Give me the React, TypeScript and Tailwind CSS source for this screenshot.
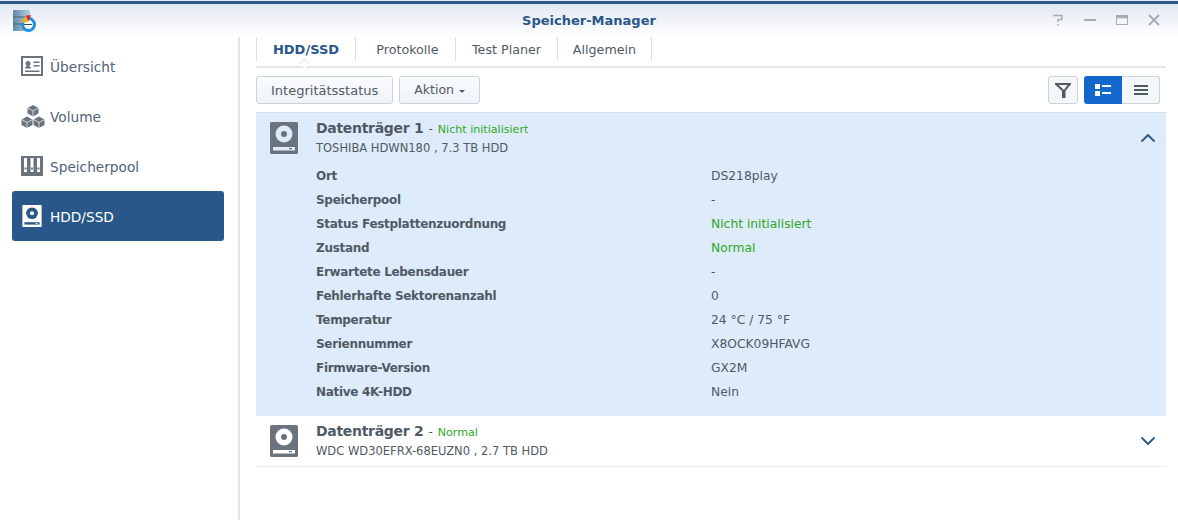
import { ChevronDown, ChevronUp } from "lucide-react";

const font = "font-['DejaVu_Sans',Verdana,sans-serif]";

const details: { label: string; value: string; green?: boolean }[] = [
  { label: "Ort", value: "DS218play" },
  { label: "Speicherpool", value: "-" },
  { label: "Status Festplattenzuordnung", value: "Nicht initialisiert", green: true },
  { label: "Zustand", value: "Normal", green: true },
  { label: "Erwartete Lebensdauer", value: "-" },
  { label: "Fehlerhafte Sektorenanzahl", value: "0" },
  { label: "Temperatur", value: "24 °C / 75 °F" },
  { label: "Seriennummer", value: "X8OCK09HFAVG" },
  { label: "Firmware-Version", value: "GX2M" },
  { label: "Native 4K-HDD", value: "Nein" },
];

function AppIcon() {
  return (
    <svg width="24" height="22" viewBox="0 0 24 22">
      <defs>
        <linearGradient id="db" x1="0" x2="1" y1="0" y2="0">
          <stop offset="0" stopColor="#5f86a8" />
          <stop offset="1" stopColor="#b6cfe2" />
        </linearGradient>
      </defs>
      <rect x="0" y="0" width="17" height="21" rx="1" fill="url(#db)" />
      <path d="M0 7h17M0 14h17" stroke="#4a5f73" strokeWidth="1" />
      <circle cx="15.500" cy="14.500" r="6" fill="#fff" stroke="#1e90e0" strokeWidth="3" />
      <path d="M7.500 13 L13 5.500 L15.500 11.500 Z" fill="#f2b01e" />
      <path d="M13 5.500 L18 5 L15.500 11.500 Z" fill="#d9232e" />
      <path d="M11 14.500h8" stroke="#2a4d6c" strokeWidth="1" />
    </svg>
  );
}

function OverviewIcon() {
  return (
    <svg width="22" height="20" viewBox="0 0 22 20">
      <path fillRule="evenodd" fill="#6b747e" d="M0 0h22v20H0zM2 2v16h18V2z" />
      <circle cx="7" cy="7.500" r="2.500" fill="#6b747e" />
      <path d="M4 12.500c0-2 1.500-2.500 3-2.500s3 .5 3 2.500z" fill="#6b747e" />
      <path d="M12.500 5.500h6v1.500h-6zM12.500 9h6v1.500h-6zM4 14.500h14.500V16H4z" fill="#6b747e" />
    </svg>
  );
}

function VolumeIcon() {
  return (
    <svg width="24" height="23" viewBox="0 0 24 23">
      <path d="M12 0l5.500 3v5.500L12 11.500 6.500 8.500V3z" fill="#6b747e" />
      <path d="M6 11.500l5.500 3V20L6 23l-5.500-3v-5.500z" fill="#6b747e" />
      <path d="M18 11.500l5.500 3V20L18 23l-5.500-3v-5.500z" fill="#6b747e" />
      <path d="M6.500 3L12 6l5.500-3M12 6v5.500M.5 14.500l5.500 3 5.500-3M6 17.500V23M12.500 14.500l5.500 3 5.500-3M18 17.500V23" stroke="#fff" strokeWidth="0.7" fill="none" />
    </svg>
  );
}

function PoolIcon() {
  return (
    <svg width="22" height="20" viewBox="0 0 22 20">
      <path fillRule="evenodd" fill="#6b747e" d="M0 0h22v20H0zM3 2v14h3V2zM9.500 2v14h3V2zM16 2v14h3V2z" />
      <path d="M3.500 11.500h2v2h-2zM10 11.500h2v2h-2zM16.500 11.500h2v2h-2z" fill="#6b747e" />
    </svg>
  );
}

function DiskIcon({ fill, hole, size }: { fill: string; hole: string; size: "sm" | "lg" }) {
  const w = size === "lg" ? 28 : 20;
  const h = size === "lg" ? 32 : 22;
  return (
    <svg width={w} height={h} viewBox="0 0 28 32">
      <rect width="28" height="32" rx="1.500" fill={fill} />
      <circle cx="14" cy="12" r="8.500" fill={hole} />
      <circle cx="14" cy="12" r="3" fill={fill} />
      <rect x="3" y="25" width="22" height="3.500" fill={hole} />
      <rect x="19" y="26" width="3" height="1.300" fill={fill} />
    </svg>
  );
}

function NavItem({ icon, label, active }: { icon: React.ReactNode; label: string; active?: boolean }) {
  return (
    <div className={`flex h-[50px] items-center rounded-[3px] pl-[9px] text-[13.700px] ${active ? "bg-[#2a5789] text-white" : "text-[#52637a]"}`}>
      <span className="flex w-[29px] items-center">{icon}</span>
      <span className="pt-[2px]">{label}</span>
    </div>
  );
}

function Tab({ label, width, active }: { label: string; width: string; active?: boolean }) {
  return (
    <div className={`flex h-6 items-center justify-center border-r border-[#d7dfe6] pt-[2px] ${width} ${active ? "text-[13px] font-bold text-[#2a5789]" : "text-[12.700px] text-[#505a64]"}`}>
      {label}
    </div>
  );
}

function ToolButton({ children }: { children: React.ReactNode }) {
  return (
    <div className="flex h-7 items-center rounded-[3px] border border-[#c8d3de] bg-gradient-to-b from-[#f9fbfd] to-[#eef3f8] px-[14px] pt-[1px] text-[#505a64]">
      {children}
    </div>
  );
}

function DiskHeader({ name, status, model, open }: { name: string; status: string; model: string; open?: boolean }) {
  return (
    <div className="flex items-start">
      <div className="ml-[14px] mt-[9px] w-[46px]">
        <DiskIcon size="lg" fill="#6b747e" hole={open ? "#deebfa" : "#ffffff"} />
      </div>
      <div className="flex-1 pt-[5px]">
        <div className="flex h-[20px] items-baseline">
          <span className="text-[14px] font-bold tracking-[-0.3px] text-[#505a64]">{name}</span>
          <span className="ml-[5px] text-[12px] text-[#505a64]">-</span>
          <span className="ml-[5px] text-[11.100px] text-[#2fa81e]">{status}</span>
        </div>
        <div className="mt-[2px] text-[11.500px] text-[#505a64]">{model}</div>
      </div>
      <div className="mr-[6px] mt-[13px] text-[#2a5789]">
        {open ? <ChevronUp size={24} strokeWidth={1.8} /> : <ChevronDown size={24} strokeWidth={1.8} />}
      </div>
    </div>
  );
}

export default function App() {
  return (
    <div className={`flex h-[520px] w-[1178px] flex-col overflow-hidden bg-white text-[13px] ${font}`}>
      <div className="h-[1px] bg-[#e8edf2]" />
      <div className="h-[3px] bg-[#2a5789]" />
      <div className="relative flex h-[33px] items-center justify-center bg-gradient-to-b from-[#e2e8f1] to-white">
        <div className="absolute left-[13px] top-[6px]">
          <AppIcon />
        </div>
        <span className="text-[13px] font-bold text-[#2a5789]">Speicher-Manager</span>
        <div className="absolute right-[18px] top-[10px] flex items-center gap-[20px] text-[#a5adb5]">
          <svg width="12" height="12" viewBox="0 0 12 12" fill="none" stroke="currentColor" strokeWidth="1.500">
            <path d="M1 1.500h9v4H6v2.500M6 10v1.500" />
          </svg>
          <svg width="12" height="12" viewBox="0 0 12 12" fill="currentColor">
            <rect y="5" width="12" height="2" />
          </svg>
          <svg width="12" height="12" viewBox="0 0 12 12" fill="none" stroke="currentColor">
            <rect x="0.500" y="1.500" width="11" height="9" />
            <path d="M0 3h12" strokeWidth="2.500" />
          </svg>
          <svg width="12" height="12" viewBox="0 0 12 12" fill="none" stroke="currentColor" strokeWidth="1.800">
            <path d="M1 1l10 10M11 1L1 11" />
          </svg>
        </div>
      </div>
      <div className="flex flex-1">
        <aside className="w-[240px] border-r-2 border-[#e2e5e8] pl-[12px] pr-[14px] pt-[4px]">
          <NavItem icon={<OverviewIcon />} label="Übersicht" />
          <NavItem icon={<VolumeIcon />} label="Volume" />
          <NavItem icon={<PoolIcon />} label="Speicherpool" />
          <NavItem icon={<span className="pl-[1px]"><DiskIcon size="sm" fill="#ffffff" hole="#2a5789" /></span>} label="HDD/SSD" active />
        </aside>
        <main className="ml-[16px] w-[910px]">
          <div className="relative flex h-[31px] items-start border-b-2 border-[#e3e6e9]">
            <div className="flex border-l border-[#d7dfe6]">
              <Tab label="HDD/SSD" width="w-[99px]" active />
              <Tab label="Protokolle" width="w-[100px] pl-[4px]" />
              <Tab label="Test Planer" width="w-[102px]" />
              <Tab label="Allgemein" width="w-[94px]" />
            </div>
            <div className="absolute bottom-[-2px] left-[45px] h-[7px] w-[7px] translate-y-[-1px] rotate-45 border-l border-t border-[#e3e6e9] bg-white" />
          </div>
          <div className="mt-[8px] flex h-[28px] items-center">
            <ToolButton>Integritätsstatus</ToolButton>
            <div className="ml-[6px] text-[12.500px]">
              <ToolButton>
                Aktion
                <span className="ml-[5px] mt-[1px] h-0 w-0 border-x-[3px] border-t-[3px] border-x-transparent border-t-[#505a64]" />
              </ToolButton>
            </div>
            <div className="ml-auto flex h-7 w-[30px] items-center justify-center rounded-[3px] border border-[#c8d3de] bg-[#f3f7fa]">
              <svg width="16" height="16" viewBox="0 0 16 16" fill="none" stroke="#505a64" strokeWidth="2">
                <path d="M1 2h14L9.500 8.500V15H8V8.500z" />
              </svg>
            </div>
            <div className="ml-[6px] flex h-7 w-[38px] items-center justify-center rounded-l-[3px] bg-[#1468cc]">
              <svg width="16" height="14" viewBox="0 0 16 14" fill="#fff">
                <path d="M0 1h5v5H0zM0 8h5v5H0zM7 2h9v2H7zM7 9h9v2H7z" />
              </svg>
            </div>
            <div className="mr-[6px] flex h-7 w-[38px] items-center justify-center rounded-r-[3px] border border-l-0 border-[#c8d3de] bg-[#f3f7fa]">
              <svg width="14" height="10" viewBox="0 0 14 10" fill="#505a64">
                <path d="M0 0h14v2H0zM0 4h14v2H0zM0 8h14v2H0z" />
              </svg>
            </div>
          </div>
          <section className="mt-[8px] h-[304px] border-t border-[#d0dce8] bg-[#deebfa]">
            <DiskHeader name="Datenträger 1" status="Nicht initialisiert" model="TOSHIBA HDWN180 , 7.3 TB HDD" open />
            <div className="mt-[7px] pl-[60px]">
              {details.map((row) => (
                <div key={row.label} className="flex h-6 items-center text-[12.300px] text-[#505a64]">
                  <span className="w-[395px] text-[12px] font-bold tracking-[-0.3px]">{row.label}</span>
                  <span className={row.green ? "text-[#2fa81e]" : ""}>{row.value}</span>
                </div>
              ))}
            </div>
          </section>
          <section className="h-[51px] border-b border-[#e6edf4]">
            <DiskHeader name="Datenträger 2" status="Normal" model="WDC WD30EFRX-68EUZN0 , 2.7 TB HDD" />
          </section>
        </main>
      </div>
    </div>
  );
}
